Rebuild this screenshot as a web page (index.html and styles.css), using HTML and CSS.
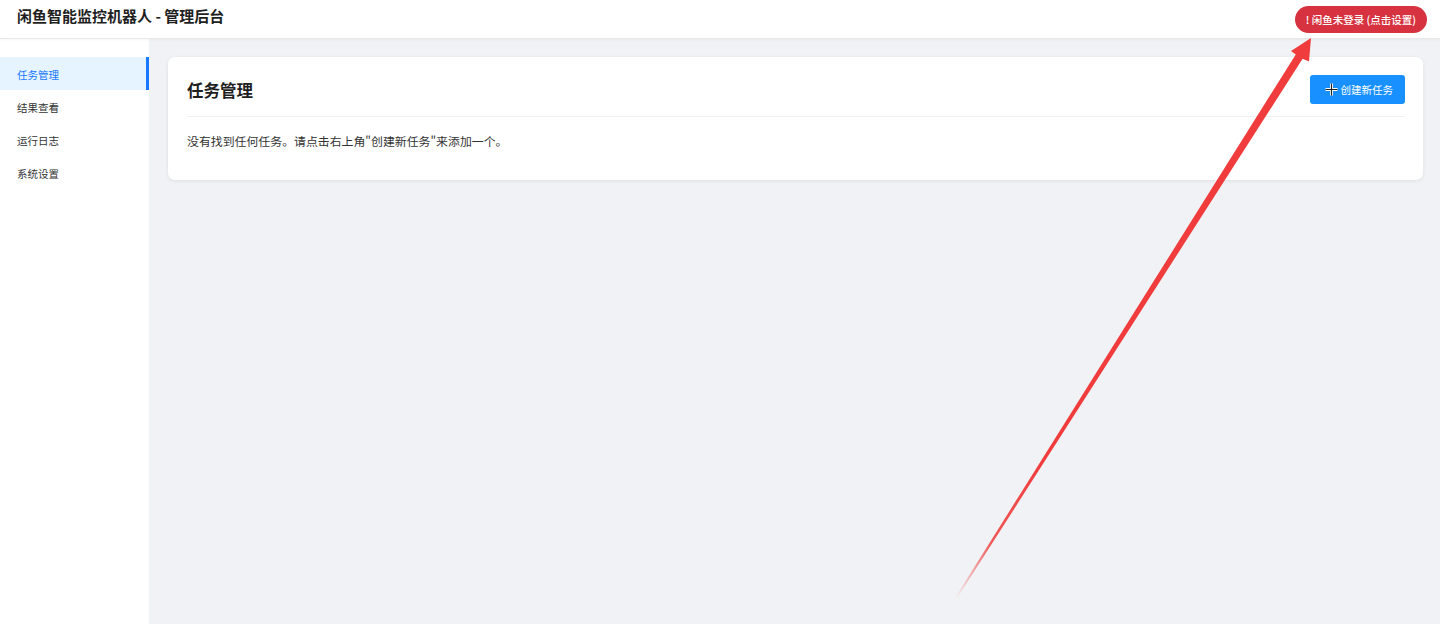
FILE: index.html
```html
<!DOCTYPE html>
<html lang="zh-CN">
<head>
    <meta charset="UTF-8">
    <meta name="viewport" content="width=device-width, initial-scale=1.0">
    <title>闲鱼智能监控机器人 - 管理后台</title>
    <link rel="stylesheet" href="styles.css">
</head>
<body>
    <header class="topbar">
        <div class="app-title">闲鱼智能监控机器人 - 管理后台</div>
        <button class="login-badge">! 闲鱼未登录 (点击设置)</button>
    </header>
    <div class="layout">
        <nav class="sidebar">
            <a class="nav-item active" href="#tasks">任务管理</a>
            <a class="nav-item" href="#results">结果查看</a>
            <a class="nav-item" href="#logs">运行日志</a>
            <a class="nav-item" href="#settings">系统设置</a>
        </nav>
        <main class="content">
            <section class="card">
                <div class="card-header">
                    <h2 class="card-title">任务管理</h2>
                    <button class="primary-btn">
                        <svg class="plus" width="13" height="13" viewBox="0 0 13 13">
                            <path d="M6.5 0.5v12M0.5 6.5h12" stroke="#fff" stroke-width="3"/>
                            <path d="M6.5 0.5v12M0.5 6.5h12" stroke="#222" stroke-width="1.2"/>
                        </svg>
                        创建新任务
                    </button>
                </div>
                <p class="empty-text">没有找到任何任务。请点击右上角"创建新任务"来添加一个。</p>
            </section>
        </main>
    </div>
    <svg class="annotation" width="1440" height="624" viewBox="0 0 1440 624">
        <defs>
            <linearGradient id="fade" x1="955" y1="598" x2="1311" y2="38" gradientUnits="userSpaceOnUse">
                <stop offset="0" stop-color="#f03c3c" stop-opacity="0"/>
                <stop offset="0.1" stop-color="#f03c3c" stop-opacity="0.85"/>
                <stop offset="0.25" stop-color="#f03c3c" stop-opacity="1"/>
            </linearGradient>
        </defs>
        <polygon fill="url(#fade)" points="955,598 1295.8,54.4 1291,51 1311,38 1309,61.5 1302.6,58.8 956.8,598.5"/>
    </svg>
</body>
</html>
```

FILE: styles.css
```css
body {
    margin: 0;
    font-family: "Noto Sans CJK SC", "Noto Sans", sans-serif;
    color: #333;
    background-color: #f0f2f5;
    height: 624px;
    overflow: hidden;
}
.topbar {
    display: flex;
    justify-content: space-between;
    align-items: center;
    height: 38px;
    padding: 0 13px 0 17px;
    background-color: #fff;
    border-bottom: 1px solid #e8e8e8;
    box-shadow: 0 1px 3px rgba(0, 0, 0, 0.04);
    position: relative;
    z-index: 1;
}
.app-title {
    font-size: 15px;
    font-weight: 700;
    color: #1f1f1f;
    margin-top: -7px;
}
.login-badge {
    font-family: inherit;
    font-size: 10.5px;
    font-weight: 500;
    color: #fff;
    background-color: #d7323f;
    border: none;
    border-radius: 14px;
    height: 27px;
    padding: 0 11px;
    margin-top: 1px;
    cursor: pointer;
}
.layout {
    display: flex;
    height: 585px;
}
.sidebar {
    width: 149px;
    flex-shrink: 0;
    background-color: #fff;
    padding-top: 18px;
    display: flex;
    flex-direction: column;
}
.nav-item {
    display: block;
    height: 33px;
    line-height: 35px;
    padding-left: 17px;
    font-size: 10.5px;
    color: #333;
    text-decoration: none;
}
.nav-item.active {
    color: #1677ff;
    background-color: #e6f4ff;
    border-right: 3px solid #1677ff;
}
.content {
    flex: 1;
    padding: 18px 17px 0 19px;
}
.card {
    background-color: #fff;
    border-radius: 7px;
    box-shadow: 0 1px 4px rgba(0, 0, 0, 0.08);
    padding: 18px 18px 30px 19px;
}
.card-header {
    display: flex;
    justify-content: space-between;
    align-items: center;
    padding-bottom: 12px;
    border-bottom: 1px solid #f0f0f0;
}
.card-title {
    margin: 0;
    font-size: 16.5px;
    font-weight: 700;
    color: #1f1f1f;
}
.primary-btn {
    display: flex;
    align-items: center;
    gap: 3px;
    height: 29px;
    padding: 0 12px 0 15px;
    font-family: inherit;
    font-size: 10.5px;
    color: #fff;
    background-color: #1890ff;
    border: none;
    border-radius: 3px;
    cursor: pointer;
}
.empty-text {
    margin: 15px 0 0;
    font-size: 11.9px;
    line-height: 18px;
    color: #333;
}
.annotation {
    position: absolute;
    top: 0;
    left: 0;
    pointer-events: none;
    z-index: 5;
}
```
